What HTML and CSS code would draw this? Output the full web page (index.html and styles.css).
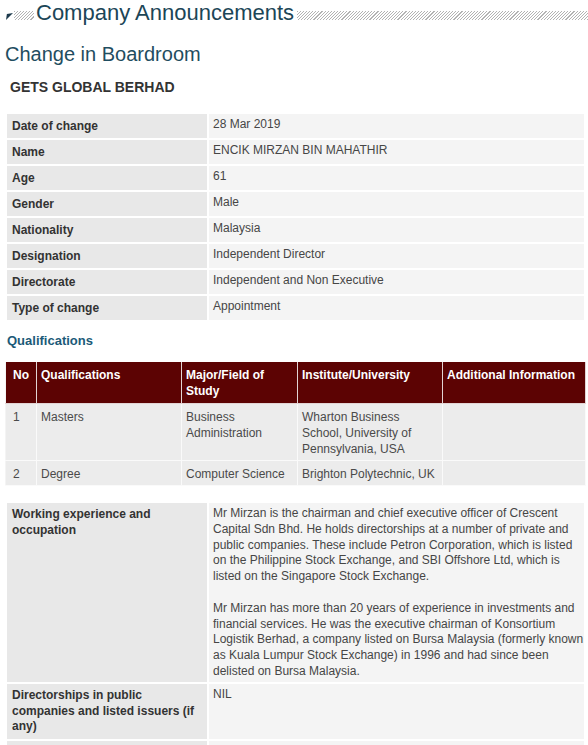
FILE: index.html
```html
<!DOCTYPE html>
<html lang="en">
<head>
<meta charset="utf-8">
<title>Company Announcements</title>
<link rel="stylesheet" href="styles.css">
</head>
<body>
<div class="page">
  <div class="page-head">
    <svg class="head-icon" width="7" height="7" viewBox="0 0 8 8"><polygon points="0,8 1,1 8,0" fill="#1d3a4c"/></svg>
    <span class="hatch hatch-short"></span>
    <h1 class="page-title">Company Announcements</h1>
    <span class="hatch hatch-long"></span>
  </div>

  <h2 class="ann-title">Change in Boardroom</h2>
  <div class="company">GETS GLOBAL BERHAD</div>

  <table class="info">
    <tr><th>Date of change</th><td>28 Mar 2019</td></tr>
    <tr><th>Name</th><td>ENCIK MIRZAN BIN MAHATHIR</td></tr>
    <tr><th>Age</th><td>61</td></tr>
    <tr><th>Gender</th><td>Male</td></tr>
    <tr><th>Nationality</th><td>Malaysia</td></tr>
    <tr><th>Designation</th><td>Independent Director</td></tr>
    <tr><th>Directorate</th><td>Independent and Non Executive</td></tr>
    <tr><th>Type of change</th><td>Appointment</td></tr>
  </table>

  <h3 class="section">Qualifications</h3>
  <table class="qual">
    <colgroup>
      <col class="c-no"><col class="c-q"><col class="c-m"><col class="c-i"><col>
    </colgroup>
    <thead>
      <tr><th class="no">No</th><th>Qualifications</th><th>Major/Field of Study</th><th>Institute/University</th><th>Additional Information</th></tr>
    </thead>
    <tbody>
      <tr><td class="no">1</td><td>Masters</td><td>Business Administration</td><td>Wharton Business School, University of Pennsylvania, USA</td><td></td></tr>
      <tr><td class="no">2</td><td>Degree</td><td>Computer Science</td><td>Brighton Polytechnic, UK</td><td></td></tr>
    </tbody>
  </table>

  <table class="info info-long">
    <tr>
      <th>Working experience and occupation</th>
      <td class="prose">Mr Mirzan is the chairman and chief executive officer of Crescent<br>Capital Sdn Bhd. He holds directorships at a number of private and<br>public companies. These include Petron Corporation, which is listed<br>on the Philippine Stock Exchange, and SBI Offshore Ltd, which is<br>listed on the Singapore Stock Exchange.<br><br>Mr Mirzan has more than 20 years of experience in investments and<br>financial services. He was the executive chairman of Konsortium<br>Logistik Berhad, a company listed on Bursa Malaysia (formerly known<br>as Kuala Lumpur Stock Exchange) in 1996 and had since been<br>delisted on Bursa Malaysia.</td>
    </tr>
    <tr>
      <th>Directorships in public companies and listed issuers (if any)</th>
      <td>NIL</td>
    </tr>
    <tr>
      <th>Family relationship with any director and/or major shareholder of the listed issuer</th>
      <td>NIL</td>
    </tr>
  </table>
</div>
</body>
</html>
```

FILE: styles.css
```css
html, body {
  margin: 0;
  padding: 0;
  background: #ffffff;
}

body {
  font-family: "Liberation Sans", Arial, sans-serif;
  font-size: 12px;
  color: #444444;
}

.page {
  padding: 0 2px 0 5px;
}

.page-head {
  display: flex;
  align-items: flex-end;
  height: 26px;
}

.head-icon {
  flex: none;
  margin: 0 1px 6px 1px;
  width: 7px;
  height: 7px;
}

.hatch {
  display: block;
  height: 9px;
  margin-bottom: 6px;
  background: repeating-linear-gradient(135deg, #b3b3b3 0 0.8px, transparent 0.8px 2.2px);
}

.hatch-short {
  flex: none;
  width: 20px;
}

.hatch-long {
  flex: 1;
  margin-left: 3px;
  margin-right: -2px;
}

.page-title {
  flex: none;
  margin: 0 0 0 2px;
  font-size: 22px;
  line-height: 26px;
  font-weight: normal;
  color: #1c4657;
}

.ann-title {
  margin: 16px 0 0 0;
  font-size: 20px;
  line-height: 24px;
  font-weight: normal;
  color: #1f4d60;
}

.company {
  margin: 13px 0 0 5px;
  font-size: 14px;
  line-height: 16px;
  font-weight: bold;
  color: #333333;
}

.info {
  width: 100%;
  margin-top: 17px;
  border-collapse: separate;
  border-spacing: 2px;
  table-layout: fixed;
}

.info th {
  width: 190px;
  padding: 4px 5px;
  background: #e8e8e8;
  color: #333333;
  font-weight: bold;
  text-align: left;
  vertical-align: top;
  line-height: 16px;
}

.info td {
  padding: 2px 4px 6px 4px;
  background: #f4f4f4;
  color: #464646;
  vertical-align: top;
  line-height: 16px;
}

.section {
  margin: 11px 0 13px 2px;
  font-size: 13px;
  line-height: 16px;
  font-weight: bold;
  color: #1b5a78;
}

.qual {
  width: 100%;
  border-collapse: collapse;
  table-layout: fixed;
}

.c-no { width: 31px; }
.c-q { width: 145px; }
.c-m { width: 116px; }
.c-i { width: 145px; }

.qual th {
  padding: 5px 4px 4px 4px;
  background: #5c0303;
  color: #ffffff;
  font-weight: bold;
  text-align: left;
  vertical-align: top;
  line-height: 16px;
  border: 1px solid #e2d4d4;
  border-top: none;
}

.qual td {
  padding: 5px 4px 3px 4px;
  background: #ececec;
  color: #4a4a4a;
  vertical-align: top;
  line-height: 16px;
  border: 1px solid #fafafa;
}

.qual .no {
  padding-left: 7px;
}

.qual tr > :first-child {
  border-left-color: #f4f4f4;
}

.info-long {
  margin-top: 15px;
}

.info-long th {
  padding: 4px 5px 4px 5px;
  line-height: 15.8px;
}

.info-long td {
  padding: 3px 0 2px 4px;
  line-height: 15.8px;
}

.prose {
  white-space: nowrap;
}
```
